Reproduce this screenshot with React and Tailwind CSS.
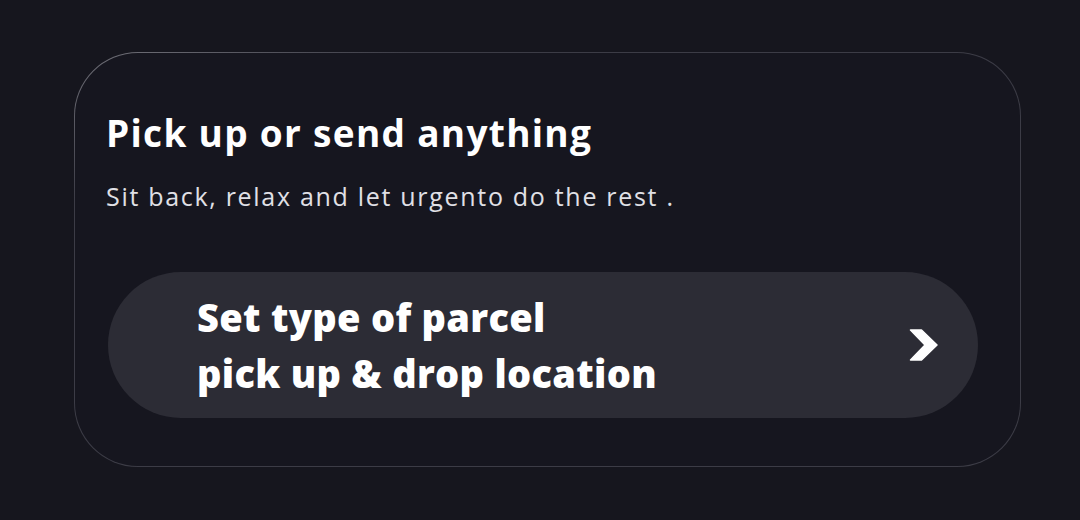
import React from "react";

const ChevronRight = () => (
  <svg width="29" height="32" viewBox="0 0 29 32" fill="white">
    <path d="M1.5 1 L12.5 1 L28 16 L12.5 31 L1.5 31 L16 16 Z" strokeLinejoin="round" stroke="white" strokeWidth="1.5" />
  </svg>
);

const App = () => {
  return (
    <div className="w-[1080px] h-[520px] bg-[#16161e] pt-[52px] pl-[74px] font-['Open_Sans',sans-serif]">
      {/* --- CARD (gradient border) --- */}
      <div className="w-[947px] h-[415px] rounded-[64px] p-[1px] bg-linear-to-br from-[#74747c] via-[#3c3c46] via-[18%] to-[#3c3c46]">
        <div className="w-full h-full rounded-[63px] bg-[#16161f] pt-[58px] px-[31px]">
          <h1 className="text-[37px] leading-[44px] font-bold text-white tracking-[1.3px]">
            Pick up or send anything
          </h1>
          <p className="mt-[26px] text-[25px] leading-[30px] font-normal text-[#e0e0e6] tracking-[1.7px]">
            Sit back, relax and let urgento do the rest .
          </p>

          {/* --- ACTION --- */}
          <button className="mt-[61px] ml-[2px] w-[870px] h-[146px] rounded-full bg-[#2c2c35] flex items-center justify-between pl-[89px] pr-[40px] text-left">
            <span className="text-[38px] leading-[56px] font-extrabold text-white tracking-[0.3px]">
              Set type of parcel
              <br />
              pick up &amp; drop location
            </span>
            <ChevronRight />
          </button>
        </div>
      </div>
    </div>
  );
};

export default App;
